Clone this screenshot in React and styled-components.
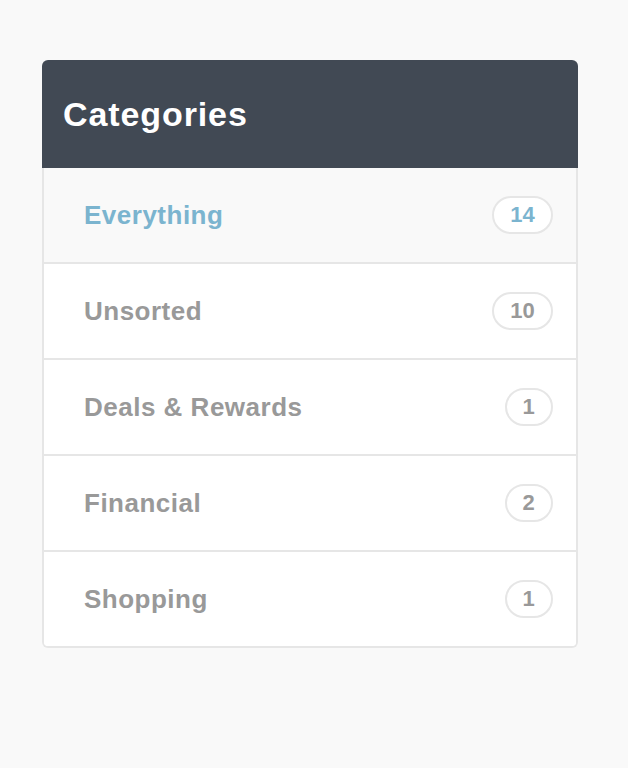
import React from "react";
import styled, { createGlobalStyle } from "styled-components";

const Global = createGlobalStyle`
  html, body { margin: 0; padding: 0; background: #f9f9f9; }
  body { font-family: "Liberation Sans", Arial, sans-serif; }
`;

const Page = styled.div`
  padding: 60px 50px 40px 42px;
`;

const Panel = styled.div`
  width: 536px;
`;

const Header = styled.div`
  height: 108px;
  box-sizing: border-box;
  border-radius: 6px 6px 0 0;
  background: #414954;
  display: flex;
  align-items: center;
  padding-left: 21px;
  color: #fff;
  font-weight: 700;
  font-size: 34px;
  letter-spacing: 0.9px;
`;

const List = styled.div`
  border: 2px solid #e6e6e6;
  border-top: none;
  border-radius: 0 0 6px 6px;
  overflow: hidden;
  background: #fff;
`;

const Row = styled.div`
  height: 94px;
  display: flex;
  align-items: center;
  justify-content: space-between;
  padding: 0 23px 0 40px;
  background: ${(p) => (p.$active ? "#f9f9f9" : "#fff")};
  color: ${(p) => (p.$active ? "#7bb4cf" : "#999")};
  font-weight: 700;
  font-size: 26px;
  letter-spacing: 0.5px;
  & + & { border-top: 2px solid #e6e6e6; }
`;

const Badge = styled.span`
  height: 38px;
  box-sizing: border-box;
  padding: 0 16px;
  border: 2px solid #e6e6e6;
  border-radius: 19px;
  background: #fff;
  display: inline-flex;
  align-items: center;
  justify-content: center;
  font-size: 22px;
  font-weight: 700;
  letter-spacing: 0.2px;
`;

const items = [
  ["Everything", 14, true],
  ["Unsorted", 10],
  ["Deals & Rewards", 1],
  ["Financial", 2],
  ["Shopping", 1],
];

export default function App() {
  return (
    <Page>
      <Global />
      <Panel>
        <Header>Categories</Header>
        <List>
          {items.map(([name, n, active]) => (
            <Row key={name} $active={active}>
              <span>{name}</span>
              <Badge>{n}</Badge>
            </Row>
          ))}
        </List>
      </Panel>
    </Page>
  );
}
